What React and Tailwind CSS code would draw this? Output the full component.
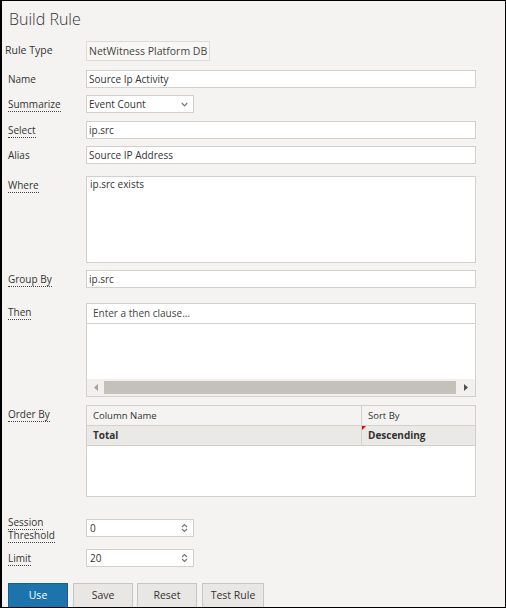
import React from 'react';

const INPUT = 'h-[18px] border border-[#d3d0cb] bg-white text-[10px] text-[#333] leading-[16px] pl-[2px]';

function Label({ children, dotted, lead = 'leading-[18px]', className = '' }) {
  return (
    <div className={`w-[78px] shrink-0 text-[10px] text-[#333] ${lead} ${className}`}>
      <span className={dotted ? 'border-b border-dotted border-[#444]' : ''}>{children}</span>
    </div>
  );
}

function Spinner() {
  return (
    <svg width="7" height="10" viewBox="0 0 7 10" className="mr-[5px]">
      <path d="M1 4 L3.5 1.5 L6 4" fill="none" stroke="#777" strokeWidth="1.2" />
      <path d="M1 6 L3.5 8.5 L6 6" fill="none" stroke="#777" strokeWidth="1.2" />
    </svg>
  );
}

function NumberBox({ value }) {
  return (
    <div className={`${INPUT} w-[108px] flex items-center justify-between pl-[3px]`}>
      <span>{value}</span>
      <Spinner />
    </div>
  );
}

function Button({ children, primary, className = '' }) {
  return (
    <button
      type="button"
      className={`h-[25px] text-[10.5px] ${
        primary
          ? 'bg-[#1b74ab] border border-[#155f8e] text-white'
          : 'bg-[#e9e7e3] border border-[#c9c6c1] text-[#333]'
      } ${className}`}
    >
      {children}
    </button>
  );
}

export default function App() {
  return (
    <div className="w-[506px] h-[608px] overflow-hidden bg-[#f4f3f1] border-l-2 border-t border-r border-b border-black font-['Open_Sans',sans-serif] pl-[6px]">
      {/* title */}
      <div className="pt-[6px] h-[30px] text-[16px] font-light leading-[24px] text-[#333] pl-[1px]">Build Rule</div>

      {/* rule type */}
      <div className="flex items-center mt-[10px] h-[20px]">
        <div className="w-[78px] -ml-[3px] mr-[3px] text-[10.5px] text-[#333]">Rule Type</div>
        <div className="h-[20px] w-[124px] border border-[#dedbd6] bg-[#f8f7f5] text-[10.5px] text-[#444] leading-[18px] pl-[2px]">
          NetWitness Platform DB
        </div>
      </div>

      <div className="flex mt-[9px]">
        <Label>Name</Label>
        <div className={`${INPUT} w-[390px]`}>Source Ip Activity</div>
      </div>

      <div className="flex mt-[7px]">
        <Label dotted>Summarize</Label>
        <div className={`${INPUT} w-[108px] flex items-center justify-between`}>
          <span>Event Count</span>
          <svg width="7" height="5" viewBox="0 0 7 5" className="mr-[5px]">
            <path d="M0.8 1 L3.5 3.8 L6.2 1" fill="none" stroke="#777" strokeWidth="1.2" />
          </svg>
        </div>
      </div>

      <div className="flex mt-[8px]">
        <Label dotted>Select</Label>
        <div className={`${INPUT} w-[390px]`}>ip.src</div>
      </div>

      <div className="flex mt-[7px]">
        <Label>Alias</Label>
        <div className={`${INPUT} w-[390px]`}>Source IP Address</div>
      </div>

      <div className="flex mt-[12px]">
        <Label dotted>Where</Label>
        <div className="h-[87px] w-[390px] border border-[#d3d0cb] bg-white text-[10px] text-[#333] leading-[13px] pl-[3px] pt-[1px]">
          ip.src exists
        </div>
      </div>

      <div className="flex mt-[7px]">
        <Label dotted>Group By</Label>
        <div className={`${INPUT} w-[390px]`}>ip.src</div>
      </div>

      {/* then */}
      <div className="flex mt-[15px]">
        <Label dotted>Then</Label>
        <div className="h-[94px] w-[390px] border border-[#d3d0cb] bg-white flex flex-col">
          <div className="h-[20px] border-b border-[#d3d0cb] text-[10px] text-[#444] leading-[19px] pl-[6px]">
            Enter a then clause...
          </div>
          <div className="flex-1" />
          <div className="h-[17px] bg-[#f1f0ee] flex items-center">
            <div className="w-[17px] flex justify-center">
              <svg width="4" height="7" viewBox="0 0 4 7"><path d="M4 0 L0 3.5 L4 7 Z" fill="#a6a39e" /></svg>
            </div>
            <div className="h-[13px] w-[352px] bg-[#c4c1ba]" />
            <div className="flex-1 flex justify-center">
              <svg width="4" height="7" viewBox="0 0 4 7"><path d="M0 0 L4 3.5 L0 7 Z" fill="#505050" /></svg>
            </div>
          </div>
        </div>
      </div>

      {/* order by */}
      <div className="flex mt-[8px]">
        <Label dotted>Order By</Label>
        <div className="h-[92px] w-[390px] border border-[#d3d0cb] bg-white flex flex-col text-[#333]">
          <div className="h-[20px] flex bg-[#f4f3f1] border-b border-[#d3d0cb] text-[9.5px] leading-[19px]">
            <div className="w-[275px] border-r border-[#d3d0cb] pl-[6px]">Column Name</div>
            <div className="pl-[6px]">Sort By</div>
          </div>
          <div className="h-[20px] flex bg-[#ebe9e6] border-b border-[#d3d0cb] text-[10px] font-bold leading-[19px]">
            <div className="w-[275px] border-r border-[#d3d0cb] pl-[6px]">Total</div>
            <div className="relative pl-[6px]">
              <span className="absolute left-0 top-0 w-0 h-0 border-t-[4px] border-r-[4px] border-t-[#e00] border-r-transparent" />
              Descending
            </div>
          </div>
        </div>
      </div>

      <div className="flex mt-[22px] h-[18px]">
        <Label dotted lead="leading-[13px]" className="-mt-[3px]">
          Session Threshold
        </Label>
        <NumberBox value="0" />
      </div>

      <div className="flex mt-[12px]">
        <Label dotted>Limit</Label>
        <NumberBox value="20" />
      </div>

      <div className="flex mt-[16px]">
        <Button primary className="w-[60px]">Use</Button>
        <Button className="w-[60px] ml-[5px]">Save</Button>
        <Button className="w-[60px] ml-[4px]">Reset</Button>
        <Button className="w-[62px] ml-[5px]">Test Rule</Button>
      </div>
    </div>
  );
}
